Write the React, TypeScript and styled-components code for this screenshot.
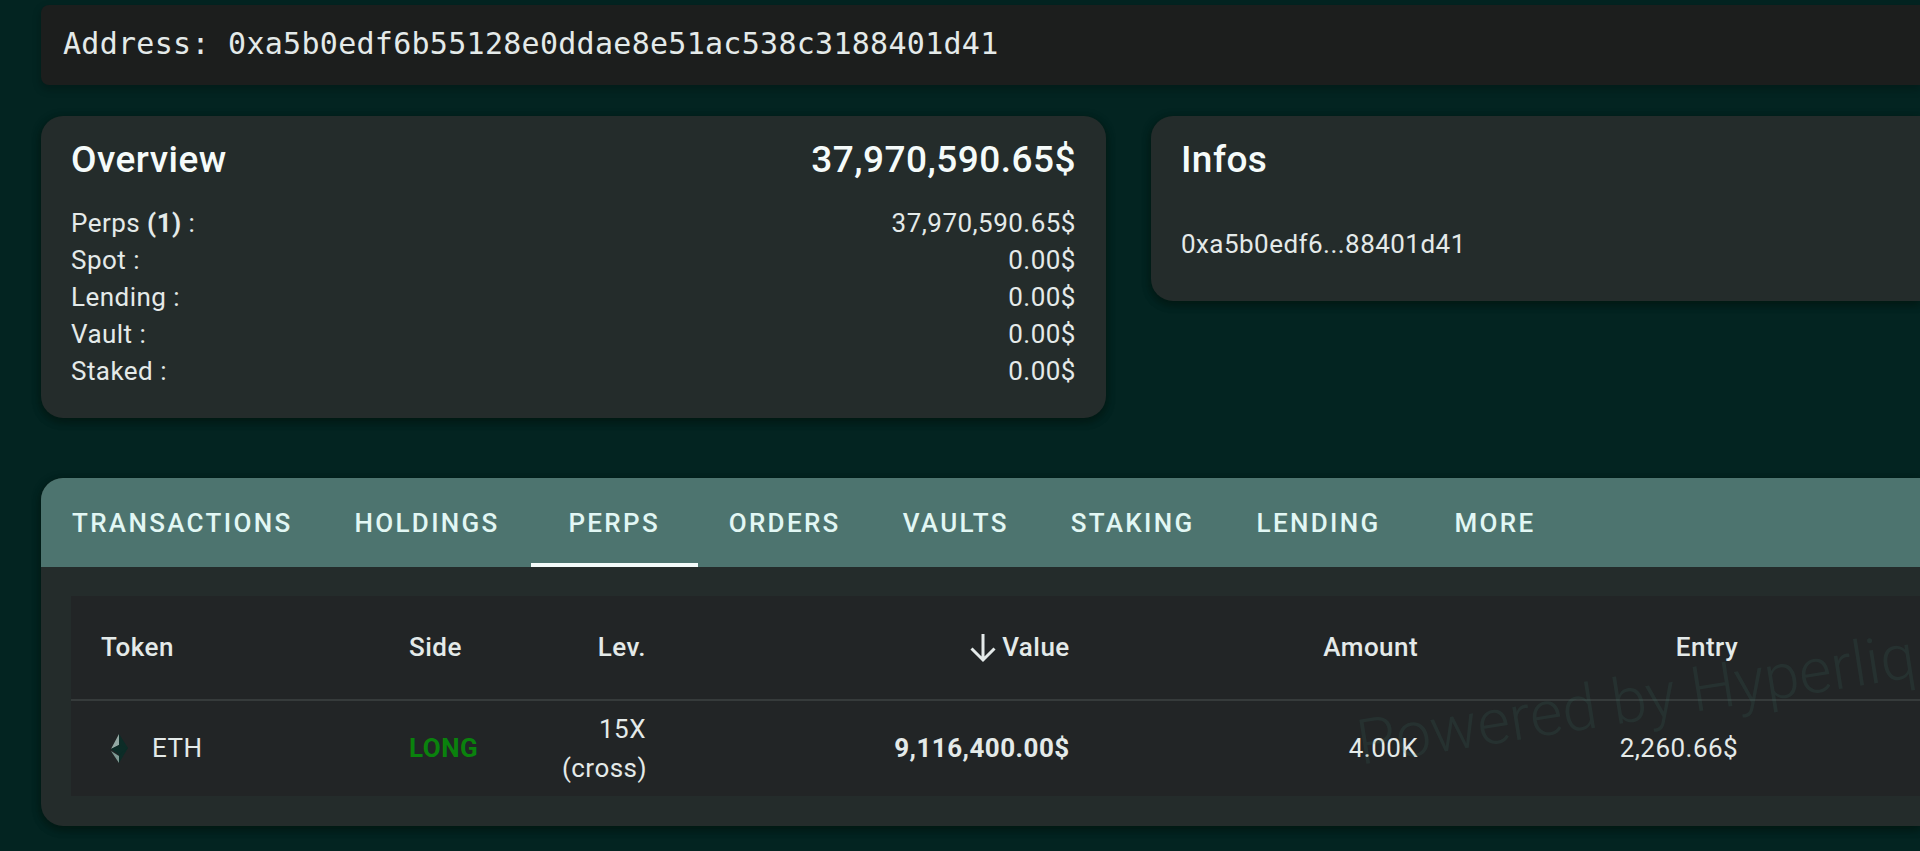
import React from "react";
import styled, { createGlobalStyle, css } from "styled-components";

const GlobalStyle = createGlobalStyle`
  *, *::before, *::after { box-sizing: border-box; }
  body {
    margin: 0;
    background: #032421;
    color: #e4eae9;
    font-family: Roboto, "Liberation Sans", sans-serif;
    font-size: 26px;
    line-height: 37px;
    letter-spacing: 0.0178em;
    overflow-x: hidden;
  }
`;

const surface = css`
  background: #242c2b;
  box-shadow: 0 4px 8px rgba(0, 10, 5, 0.3), 0 2px 10px rgba(0, 20, 8, 0.4);
`;

const Page = styled.main`
  padding: 5px 0 24px 41px;
`;

const AddressBar = styled.header`
  padding: 20px 22px 22px;
  border-radius: 8px 0 0 8px;
  background: #1c1e1d;
  box-shadow: 0 4px 8px rgba(0, 10, 5, 0.3);
  font-family: "DejaVu Sans Mono", monospace;
  font-size: 30px;
  line-height: 38px;
  letter-spacing: 0.0094em;
`;

const Cards = styled.section`
  display: grid;
  grid-template-columns: 18fr 13fr;
  align-items: start;
  gap: 45px;
  margin-top: 31px;
`;

const Card = styled.article<{ $bleed?: boolean }>`
  ${surface}
  padding: 20px 30px 28px;
  border-radius: ${(p) => (p.$bleed ? "22px 0 0 22px" : "22px")};
`;

const CardHead = styled.div`
  display: flex;
  justify-content: space-between;
  color: #f5fbfa;
`;

const Title = styled.h2`
  margin: 0;
  font-size: 37px;
  font-weight: 500;
  line-height: 48px;
  letter-spacing: 0.0125em;
`;

const Total = styled(Title).attrs({ as: "strong" })``;

const Balances = styled.dl`
  margin: 21px 0 0;
`;

const Balance = styled.div`
  display: flex;
  justify-content: space-between;
`;

const Amount = styled.dd`
  margin: 0;
`;

const ShortAddress = styled.p`
  margin: 42px 0 10px;
`;

const Panel = styled.section`
  ${surface}
  margin-top: 60px;
  border-radius: 22px 0 0 22px;
  overflow: hidden;
`;

const Tabs = styled.nav`
  display: flex;
  background: #4d746f;
`;

const Tab = styled.button<{ $active?: boolean }>`
  min-width: 167px;
  height: 89px;
  padding: 5px 31px 0;
  border: 0;
  border-bottom: 4px solid ${(p) => (p.$active ? "#f4fbfa" : "transparent")};
  background: none;
  color: #e2f7f4;
  font: inherit;
  font-weight: 500;
  letter-spacing: 0.0893em;
  text-transform: uppercase;
  cursor: pointer;
`;

const TableArea = styled.div`
  position: relative;
  margin: 29px 0 30px 30px;
  background: #222526;
`;

const Watermark = styled.span`
  position: absolute;
  right: 2px;
  bottom: 56px;
  color: rgba(60, 110, 100, 0.17);
  font-size: 63px;
  font-weight: 300;
  line-height: 80px;
  letter-spacing: 0;
  white-space: nowrap;
  transform: rotate(-9deg);
  pointer-events: none;
`;

const Table = styled.table`
  width: 100%;
  table-layout: fixed;
  border-collapse: collapse;
`;

const HeadCell = styled.th<{ $end?: boolean }>`
  height: 104px;
  padding: 0 30px;
  border-bottom: 2px solid #363b3b;
  font-weight: 500;
  text-align: ${(p) => (p.$end ? "right" : "left")};
`;

const Cell = styled.td<{ $end?: boolean; $strong?: boolean }>`
  height: 96px;
  padding: 0 30px;
  line-height: 39px;
  font-weight: ${(p) => (p.$strong ? 700 : 400)};
  text-align: ${(p) => (p.$end ? "right" : "left")};
`;

const Sorted = styled.span`
  display: flex;
  align-items: center;
  justify-content: flex-end;
  gap: 6px;
`;

const Token = styled.span`
  display: flex;
  align-items: center;
  gap: 21px;
`;

const Long = styled.span`
  color: #0a820d;
  font-weight: 700;
`;

const columns = [16.66, 8.27, 7.79, 22.92, 18.84, 17.31, 8.21];
const tabs = ["Transactions", "Holdings", "Perps", "Orders", "Vaults", "Staking", "Lending", "More"];
const balances = [
  { label: "Spot", value: "0.00$" },
  { label: "Lending", value: "0.00$" },
  { label: "Vault", value: "0.00$" },
  { label: "Staked", value: "0.00$" },
];

const ArrowDown = () => (
  <svg width="26" height="32" viewBox="0 0 26 32" fill="none" stroke="currentColor" strokeWidth="3" aria-hidden="true">
    <path d="M13 2V28M1.500 16.500L13 28L24.500 16.500" />
  </svg>
);

const EthIcon = () => (
  <svg width="30" height="38" viewBox="0 0 30 38" aria-hidden="true">
    <path d="M18 4L27 18L18 33Z" fill="#0c2c27" />
    <path d="M18 4V15L10 19Z" fill="#93a8a3" />
    <path d="M18 15L27 18L18 25L10 19Z" fill="#0c2c27" />
    <path d="M10 21L18 26V33Z" fill="#7f9a94" />
  </svg>
);

export default function App() {
  return (
    <>
      <GlobalStyle />
      <Page>
        <AddressBar>Address: 0xa5b0edf6b55128e0ddae8e51ac538c3188401d41</AddressBar>
        <Cards>
          <Card>
            <CardHead>
              <Title>Overview</Title>
              <Total>37,970,590.65$</Total>
            </CardHead>
            <Balances>
              <Balance>
                <dt>Perps <b>(1)</b> :</dt>
                <Amount>37,970,590.65$</Amount>
              </Balance>
              {balances.map((b) => (
                <Balance key={b.label}>
                  <dt>{b.label} :</dt>
                  <Amount>{b.value}</Amount>
                </Balance>
              ))}
            </Balances>
          </Card>
          <Card $bleed>
            <CardHead>
              <Title>Infos</Title>
            </CardHead>
            <ShortAddress>0xa5b0edf6...88401d41</ShortAddress>
          </Card>
        </Cards>
        <Panel>
          <Tabs>
            {tabs.map((t) => (
              <Tab key={t} type="button" $active={t === "Perps"}>{t}</Tab>
            ))}
          </Tabs>
          <TableArea>
            <Table>
              <colgroup>
                {columns.map((w, i) => (
                  <col key={i} style={{ width: `${w}%` }} />
                ))}
              </colgroup>
              <thead>
                <tr>
                  <HeadCell>Token</HeadCell>
                  <HeadCell>Side</HeadCell>
                  <HeadCell $end>Lev.</HeadCell>
                  <HeadCell $end><Sorted><ArrowDown />Value</Sorted></HeadCell>
                  <HeadCell $end>Amount</HeadCell>
                  <HeadCell $end>Entry</HeadCell>
                  <HeadCell />
                </tr>
              </thead>
              <tbody>
                <tr>
                  <Cell><Token><EthIcon />ETH</Token></Cell>
                  <Cell><Long>LONG</Long></Cell>
                  <Cell $end>15X (cross)</Cell>
                  <Cell $end $strong>9,116,400.00$</Cell>
                  <Cell $end>4.00K</Cell>
                  <Cell $end>2,260.66$</Cell>
                  <Cell />
                </tr>
              </tbody>
            </Table>
            <Watermark>Powered by Hyperliq</Watermark>
          </TableArea>
        </Panel>
      </Page>
    </>
  );
}
